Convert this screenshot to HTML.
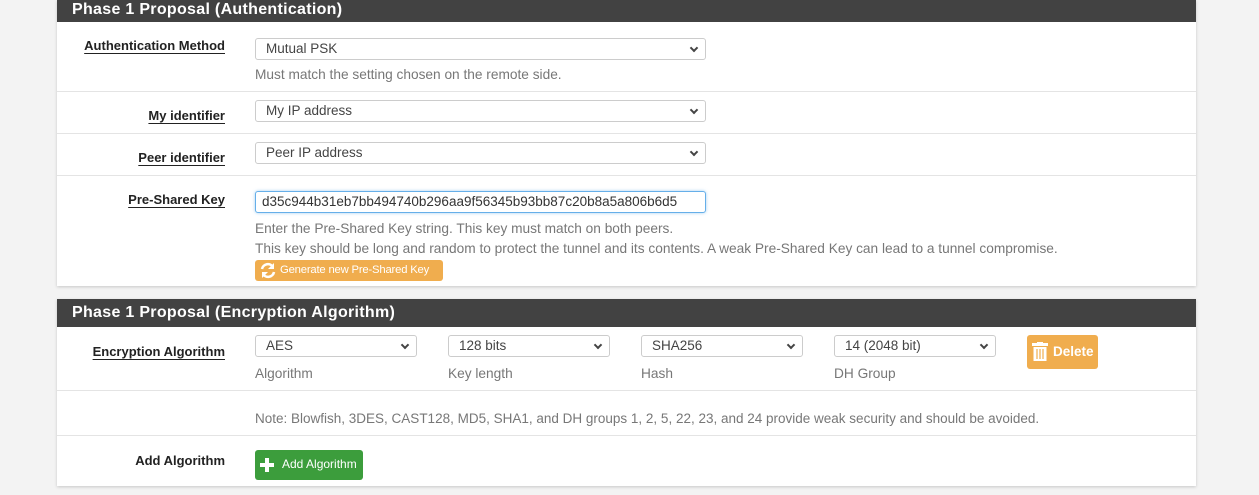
<!DOCTYPE html>
<html><head><style>
*{box-sizing:border-box;margin:0;padding:0}
body{width:1259px;height:495px;background:#f3f3f3;font-family:"Liberation Sans",sans-serif;font-size:13px;color:#333;position:relative;overflow:hidden}
.panel{position:absolute;left:57px;width:1139px;background:#fff;box-shadow:0 1px 3px rgba(0,0,0,.18)}
.hd{position:absolute;left:0;width:1139px;height:22px;background:#424242;color:#fff;font-weight:bold;font-size:16px;padding:0 0 0 15px;line-height:20px;letter-spacing:.3px}
.row{position:absolute;left:0;width:1139px;border-top:1px solid #e4e4e4}
.lbl{position:absolute;right:971px;font-weight:bold;font-size:13px;color:#222;white-space:nowrap}
.lbl.u{text-decoration:underline;text-underline-offset:3px}
.sel{position:absolute;height:22px;border:1px solid #ccc;border-radius:3px;background:#fff;padding-left:10px;line-height:20px;font-size:13.5px;color:#444}
.sel.c:after{content:"";position:absolute;right:8px;top:6px;width:4px;height:4px;border-right:2px solid #444;border-bottom:2px solid #444;transform:rotate(45deg)}
.help{position:absolute;color:#777;font-size:13.7px;white-space:nowrap}
.btn{position:absolute;border-radius:3px;color:#fff;font-size:12px;white-space:nowrap}
</style></head><body>

<div class="panel" style="top:0;height:286px">
  <div class="hd" style="top:0">Phase 1 Proposal (Authentication)</div>
  <div class="row" style="top:22px;height:69px;border-top:none">
    <div class="lbl u" style="top:16px">Authentication Method</div>
    <div class="sel c" style="left:198px;top:16px;width:451px">Mutual PSK</div>
    <div class="help" style="left:198px;top:45px">Must match the setting chosen on the remote side.</div>
  </div>
  <div class="row" style="top:91px;height:42px">
    <div class="lbl u" style="top:16px">My identifier</div>
    <div class="sel c" style="left:198px;top:8px;width:451px">My IP address</div>
  </div>
  <div class="row" style="top:133px;height:42px">
    <div class="lbl u" style="top:16px">Peer identifier</div>
    <div class="sel c" style="left:198px;top:8px;width:451px">Peer IP address</div>
  </div>
  <div class="row" style="top:175px;height:111px">
    <div class="lbl u" style="top:16px">Pre-Shared Key</div>
    <div class="sel" style="left:198px;top:15px;width:451px;border-color:#66afe9;box-shadow:0 0 3px rgba(102,175,233,.6);padding-left:6px;color:#333">d35c944b31eb7bb494740b296aa9f56345b93bb87c20b8a5a806b6d5</div>
    <div class="help" style="left:198px;top:45px">Enter the Pre-Shared Key string. This key must match on both peers.</div>
    <div class="help" style="left:198px;top:65px">This key should be long and random to protect the tunnel and its contents. A weak Pre-Shared Key can lead to a tunnel compromise.</div>
    <div class="btn" style="left:198px;top:84px;width:188px;height:21px;background:#f0ad4e;line-height:21px;padding-left:25px;font-size:11.3px;letter-spacing:-.2px">
      <svg style="position:absolute;left:4px;top:2px" width="18" height="17" viewBox="0 0 18 17"><path d="M3 7 A6 6 0 0 1 14 5" stroke="#fff" stroke-width="2.6" fill="none"/><path d="M15 1 L15 7 L9 7Z" fill="#fff"/><path d="M15 10 A6 6 0 0 1 4 12" stroke="#fff" stroke-width="2.6" fill="none"/><path d="M3 16 L3 10 L9 10Z" fill="#fff"/></svg>
      Generate new Pre-Shared Key</div>
  </div>
</div>

<div class="panel" style="top:299px;height:187px">
  <div class="hd" style="top:0;height:28px;line-height:27px">Phase 1 Proposal (Encryption Algorithm)</div>
  <div class="row" style="top:28px;height:63px;border-top:none">
    <div class="lbl u" style="top:17px">Encryption Algorithm</div>
    <div class="sel c" style="left:198px;top:8px;width:162px">AES</div>
    <div class="help" style="left:198px;top:39px">Algorithm</div>
    <div class="sel c" style="left:391px;top:8px;width:162px">128 bits</div>
    <div class="help" style="left:391px;top:39px">Key length</div>
    <div class="sel c" style="left:584px;top:8px;width:162px">SHA256</div>
    <div class="help" style="left:584px;top:39px">Hash</div>
    <div class="sel c" style="left:777px;top:8px;width:162px">14 (2048 bit)</div>
    <div class="help" style="left:777px;top:39px">DH Group</div>
    <div class="btn" style="left:970px;top:8px;width:71px;height:34px;background:#f0ad4e;line-height:33px;padding-left:26px;font-size:13.5px;font-weight:bold">
      <svg style="position:absolute;left:5px;top:7px" width="16" height="20" viewBox="0 0 16 20"><rect x="0" y="1" width="16" height="3" fill="#fff"/><rect x="5" y="0" width="6" height="2" fill="#fff"/><path d="M1.5 5 H14.5 V19 H1.5Z" fill="#fff"/><path d="M5 7V17M8 7V17M11 7V17" stroke="#f0ad4e" stroke-width="1.2"/></svg>
      Delete</div>
  </div>
  <div class="row" style="top:91px;height:45px">
    <div class="help" style="left:198px;top:20px;font-size:13.5px">Note: Blowfish, 3DES, CAST128, MD5, SHA1, and DH groups 1, 2, 5, 22, 23, and 24 provide weak security and should be avoided.</div>
  </div>
  <div class="row" style="top:136px;height:51px">
    <div class="lbl" style="top:17px">Add Algorithm</div>
    <div class="btn" style="left:198px;top:14px;width:108px;height:30px;background:#3c9d3c;line-height:29px;padding-left:27px">
      <svg style="position:absolute;left:4px;top:7px" width="16" height="16" viewBox="0 0 16 16"><path d="M8 1V15M1 8H15" stroke="#fff" stroke-width="4"/></svg>
      Add Algorithm</div>
  </div>
</div>
</body></html>
